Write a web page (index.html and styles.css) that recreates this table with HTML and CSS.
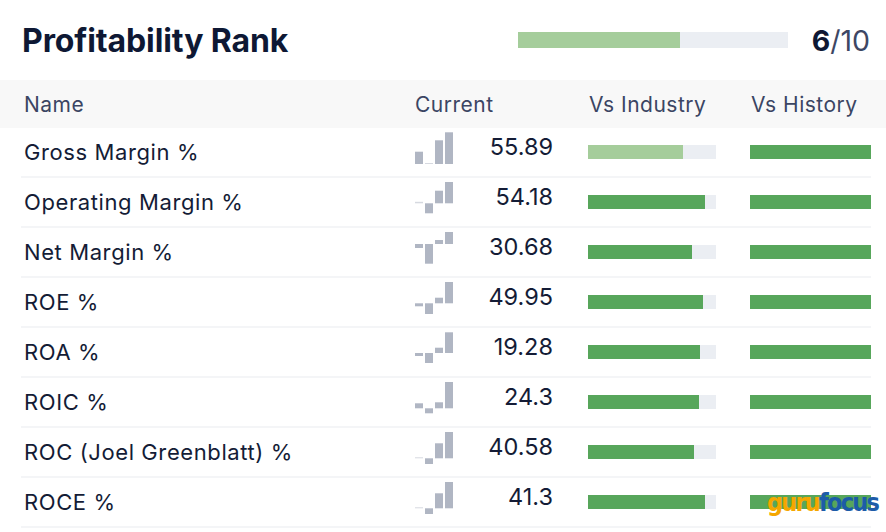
FILE: index.html
```html
<!DOCTYPE html>
<html>
<head>
<meta charset="utf-8">
<link rel="stylesheet" href="styles.css">
</head>
<body>
<div class="card">
  <div class="top">
    <h1 class="title">Profitability Rank</h1>
    <div class="rank-bar"><div class="rank-fill" style="width:60%"></div></div>
    <div class="score"><b>6</b>/10</div>
  </div>
  <div class="thead">
    <div>Name</div><div>Current</div><div>Vs Industry</div><div>Vs History</div>
  </div>
  <div class="tbody">
    <div class="row">
      <div class="name">Gross Margin %</div>
      <div class="cur">
        <svg class="spark" width="38" height="32" viewBox="0 0 38 32"><rect class="b" x="0" y="19.7" width="8" height="12.3"/><rect class="z" x="10" y="31" width="8" height="1"/><rect class="b" x="20" y="8.3" width="8" height="23.7"/><rect class="b" x="30" y="0.3" width="8" height="31.7"/></svg>
        <span class="num">55.89</span>
      </div>
      <div class="bar ind"><div class="fill light" style="width:74%"></div></div>
      <div class="bar hist"><div class="fill" style="width:100%"></div></div>
    </div>
    <div class="row">
      <div class="name">Operating Margin %</div>
      <div class="cur">
        <svg class="spark" width="38" height="32" viewBox="0 0 38 32"><rect class="z" x="0" y="19.8" width="8" height="1.5"/><rect class="b" x="10" y="21.3" width="8" height="10"/><rect class="b" x="20" y="8.7" width="8" height="12.6"/><rect class="b" x="30" y="0" width="8" height="21.3"/></svg>
        <span class="num">54.18</span>
      </div>
      <div class="bar ind"><div class="fill" style="width:91.5%"></div></div>
      <div class="bar hist"><div class="fill" style="width:100%"></div></div>
    </div>
    <div class="row">
      <div class="name">Net Margin %</div>
      <div class="cur">
        <svg class="spark" width="38" height="32" viewBox="0 0 38 32"><rect class="b" x="0" y="12" width="8" height="4"/><rect class="b" x="10" y="12" width="8" height="19.7"/><rect class="b" x="20" y="8" width="8" height="4"/><rect class="b" x="30" y="0" width="8" height="12"/></svg>
        <span class="num">30.68</span>
      </div>
      <div class="bar ind"><div class="fill" style="width:81%"></div></div>
      <div class="bar hist"><div class="fill" style="width:100%"></div></div>
    </div>
    <div class="row">
      <div class="name">ROE %</div>
      <div class="cur">
        <svg class="spark" width="38" height="32" viewBox="0 0 38 32"><rect class="b" x="0" y="21.3" width="8" height="3"/><rect class="b" x="10" y="21.3" width="8" height="10.7"/><rect class="b" x="20" y="15.7" width="8" height="5.6"/><rect class="b" x="30" y="0" width="8" height="21.3"/></svg>
        <span class="num">49.95</span>
      </div>
      <div class="bar ind"><div class="fill" style="width:89.5%"></div></div>
      <div class="bar hist"><div class="fill" style="width:100%"></div></div>
    </div>
    <div class="row">
      <div class="name">ROA %</div>
      <div class="cur">
        <svg class="spark" width="38" height="32" viewBox="0 0 38 32"><rect class="b" x="0" y="21" width="8" height="3"/><rect class="b" x="10" y="21" width="8" height="10"/><rect class="b" x="20" y="15.7" width="8" height="5.3"/><rect class="b" x="30" y="0.3" width="8" height="20.7"/></svg>
        <span class="num">19.28</span>
      </div>
      <div class="bar ind"><div class="fill" style="width:87.5%"></div></div>
      <div class="bar hist"><div class="fill" style="width:100%"></div></div>
    </div>
    <div class="row">
      <div class="name">ROIC %</div>
      <div class="cur">
        <svg class="spark" width="38" height="32" viewBox="0 0 38 32"><rect class="b" x="0" y="21.3" width="8" height="5"/><rect class="b" x="10" y="26.3" width="8" height="5"/><rect class="b" x="20" y="20.3" width="8" height="6"/><rect class="b" x="30" y="0" width="8" height="26.3"/></svg>
        <span class="num">24.3</span>
      </div>
      <div class="bar ind"><div class="fill" style="width:86.5%"></div></div>
      <div class="bar hist"><div class="fill" style="width:100%"></div></div>
    </div>
    <div class="row">
      <div class="name">ROC (Joel Greenblatt) %</div>
      <div class="cur">
        <svg class="spark" width="38" height="32" viewBox="0 0 38 32"><rect class="z" x="0" y="25.3" width="8" height="1"/><rect class="b" x="10" y="26.3" width="8" height="5.7"/><rect class="b" x="20" y="11.3" width="8" height="15"/><rect class="b" x="30" y="0" width="8" height="26.3"/></svg>
        <span class="num">40.58</span>
      </div>
      <div class="bar ind"><div class="fill" style="width:83%"></div></div>
      <div class="bar hist"><div class="fill" style="width:100%"></div></div>
    </div>
    <div class="row">
      <div class="name">ROCE %</div>
      <div class="cur">
        <svg class="spark" width="38" height="32" viewBox="0 0 38 32"><rect class="z" x="0" y="25.3" width="8" height="1"/><rect class="b" x="10" y="26.3" width="8" height="5.7"/><rect class="b" x="20" y="11.3" width="8" height="15"/><rect class="b" x="30" y="0" width="8" height="26.3"/></svg>
        <span class="num">41.3</span>
      </div>
      <div class="bar ind"><div class="fill" style="width:91.5%"></div></div>
      <div class="bar hist"><div class="fill" style="width:100%"></div></div>
    </div>
  </div>
  <div class="logo"><span class="guru">guru</span><span class="focus">focus</span></div>
</div>
</body>
</html>
```

FILE: styles.css
```css
* { box-sizing: border-box; }
html, body { margin: 0; padding: 0; background: #ffffff; }
body { font-family: Inter, "Noto Sans", sans-serif; color: #111a34; }
.card { position: relative; width: 886px; height: 532px; overflow: hidden; }
.top { display: flex; align-items: center; height: 80px; padding: 0 16px 0 22px; }
.title { flex: 1; margin: 0; font-size: 32px; font-weight: 700; color: #0e1834; letter-spacing: -0.1px; }
.rank-bar { width: 270px; height: 16px; background: #ebeef3; margin-right: 24px; }
.rank-fill { height: 100%; background: #a5cd9b; }
.score { font-size: 28.5px; color: #3d4764; }
.score b { color: #0e1834; font-weight: 700; }
.thead { display: grid; grid-template-columns: 391px 174px 162px 1fr; align-items: center; height: 48px; padding-left: 24px; background: #f8f8f8; font-size: 21px; letter-spacing: 0.5px; color: #3b4563; }
.tbody { margin-left: 21px; width: 850px; }
.row { display: grid; grid-template-columns: 394px 173px 162px 121px; align-items: center; height: 50px; border-bottom: 2px solid #f4f5f7; }
.name { padding-left: 3px; font-size: 22px; letter-spacing: 0.6px; color: #141c36; }
.cur { display: flex; align-self: start; align-items: flex-start; padding-right: 35px; }
.spark { display: block; margin-top: 4px; flex: none; }
.spark .b { fill: #b0b6c3; }
.spark .z { fill: #d6d9e0; }
.num { flex: 1; text-align: right; font-size: 23.5px; line-height: 28px; margin-top: 5px; color: #141c36; }
.bar { height: 14px; background: #ebeef3; }
.bar.ind { width: 128px; }
.bar.hist { width: 121px; }
.fill { height: 100%; background: #57a65b; }
.fill.light { background: #a5cd9b; }
.logo { position: absolute; left: 767px; top: 488px; font-family: "DejaVu Sans Condensed", "DejaVu Sans", sans-serif; font-size: 25px; font-weight: 700; letter-spacing: -1.8px; }
.guru { color: #f5a700; }
.focus { color: #1c5ca8; }
```
